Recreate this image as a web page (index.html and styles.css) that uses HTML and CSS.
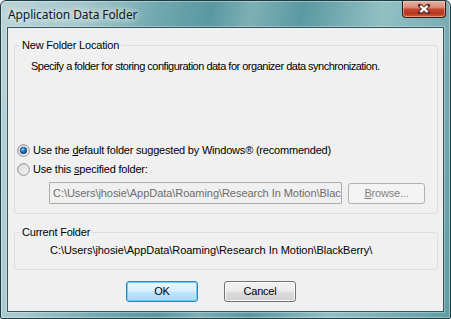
FILE: index.html
```html
<!DOCTYPE html>
<html>
<head>
<meta charset="utf-8">
<link rel="stylesheet" href="styles.css">
</head>
<body>
<div class="window">
  <div class="titlebar">
    <span class="title">Application Data Folder</span>
    <div class="close">
      <svg width="12" height="10" viewBox="0 0 12 10">
        <path d="M2 1.5 L10 8.5 M10 1.5 L2 8.5" stroke="#4a2a24" stroke-width="4" stroke-linecap="square"/>
        <path d="M2.3 1.8 L9.7 8.2 M9.7 1.8 L2.3 8.2" stroke="#ffffff" stroke-width="2.2" stroke-linecap="butt"/>
      </svg>
    </div>
  </div>
  <div class="client">
    <fieldset class="group group-location">
      <legend>New Folder Location</legend>
      <div class="desc">Specify a folder for storing configuration data for organizer data synchronization.</div>
      <div class="radio-row first">
        <svg class="radio" width="13" height="13" viewBox="0 0 13 13">
          <defs>
            <linearGradient id="rg1" x1="0" y1="0" x2="1" y2="1">
              <stop offset="0" stop-color="#d6d6d6"/>
              <stop offset="1" stop-color="#fbfbfb"/>
            </linearGradient>
            <radialGradient id="dot" cx="0.4" cy="0.35" r="0.7">
              <stop offset="0" stop-color="#8fd0ff"/>
              <stop offset="0.45" stop-color="#1f78c9"/>
              <stop offset="1" stop-color="#0b3b78"/>
            </radialGradient>
          </defs>
          <circle cx="6.5" cy="6.5" r="5.8" fill="url(#rg1)" stroke="#8b8d8f" stroke-width="1"/>
          <circle cx="6.5" cy="6.5" r="3.3" fill="url(#dot)" stroke="#1c4f86" stroke-width="0.8"/>
        </svg>
        <span class="label">Use the <u>d</u>efault folder suggested by Windows® (recommended)</span>
      </div>
      <div class="radio-row second">
        <svg class="radio" width="13" height="13" viewBox="0 0 13 13">
          <defs>
            <linearGradient id="rg2" x1="0" y1="0" x2="1" y2="1">
              <stop offset="0" stop-color="#d2d2d2"/>
              <stop offset="1" stop-color="#fcfcfc"/>
            </linearGradient>
          </defs>
          <circle cx="6.5" cy="6.5" r="5.8" fill="url(#rg2)" stroke="#8b8d8f" stroke-width="1"/>
          <circle cx="6.5" cy="6.5" r="3.8" fill="none" stroke="#e9e9e9" stroke-width="1"/>
        </svg>
        <span class="label">Use this <u>s</u>pecified folder:</span>
      </div>
      <div class="path-row">
        <div class="field"><span class="field-text">C:\Users\jhosie\AppData\Roaming\Research In Motion\BlackBerry\</span></div>
        <div class="btn btn-disabled"><u>B</u>rowse...</div>
      </div>
    </fieldset>
    <fieldset class="group group-current">
      <legend>Current Folder</legend>
      <div class="current-path">C:\Users\jhosie\AppData\Roaming\Research In Motion\BlackBerry\</div>
    </fieldset>
    <div class="buttons">
      <div class="btn btn-default">OK</div>
      <div class="btn btn-normal">Cancel</div>
    </div>
  </div>
</div>
</body>
</html>
```
FILE: styles.css
```css
html, body {
  margin: 0;
  padding: 0;
  background: #ffffff;
}

.window {
  box-sizing: border-box;
  width: 451px;
  height: 319px;
  border: 1px solid #1f3b42;
  border-radius: 6px 6px 2px 2px;
  background: linear-gradient(100deg, #b9d4d7 0%, #a3c7cb 16%, #6ea7af 32%, #5a98a1 42%, #7db0b6 50%, #5b99a2 60%, #91c0c4 76%, #7fb2b8 86%, #5e9ca5 100%);
  box-shadow: inset 0 0 0 1px rgba(255,255,255,0.35);
  display: flex;
  flex-direction: column;
  font-family: "Liberation Sans", Arial, sans-serif;
  font-size: 11px;
  line-height: 13px;
  letter-spacing: -0.2px;
  color: #000;
}

.titlebar {
  height: 26px;
  flex: none;
  display: flex;
  align-items: flex-start;
  justify-content: space-between;
}

.title {
  font-family: "Noto Sans", "Open Sans", sans-serif;
  font-size: 12px;
  line-height: 16px;
  letter-spacing: -0.1px;
  margin-top: 6px;
  margin-left: 7px;
  color: #0b1a1c;
  text-shadow: 0 0 6px rgba(255,255,255,0.95), 0 0 10px rgba(255,255,255,0.7), 0 0 14px rgba(255,255,255,0.5);
}

.close {
  box-sizing: border-box;
  width: 44px;
  height: 17px;
  margin-right: 4px;
  border: 1px solid #3b1810;
  border-top: none;
  border-radius: 0 0 4px 4px;
  background: linear-gradient(#e9b0a2 0%, #d98a77 40%, #c4472f 52%, #b7361f 78%, #d0603f 100%);
  box-shadow: inset 0 0 0 1px rgba(255,220,210,0.45);
  display: flex;
  align-items: center;
  justify-content: center;
}

.client {
  box-sizing: border-box;
  flex: 1;
  margin: 0 6px 6px 6px;
  border: 1px solid #34555b;
  box-shadow: 0 0 0 1px rgba(255,255,255,0.3);
  background: #f0f0f0;
  display: flex;
  flex-direction: column;
}

.group {
  margin: 0 5px 0 6px;
  border: 1px solid #d5dfe5;
  border-radius: 3px;
  padding: 0 2px;
  min-width: 0;
}

.group legend {
  padding: 0 2px;
  margin-left: 3px;
  line-height: 13px;
}

.group-location {
  margin-top: 11px;
  padding-top: 8px;
  padding-bottom: 9px;
}

.group-current {
  margin-top: 12px;
  padding-top: 5px;
  padding-bottom: 12px;
}

.desc {
  margin-left: 14px;
  white-space: nowrap;
  letter-spacing: -0.5px;
}

.radio-row {
  display: flex;
  align-items: center;
  height: 13px;
}

.radio-row.first {
  margin-top: 71px;
}

.radio-row.second {
  margin-top: 6px;
}

.radio {
  flex: none;
  display: block;
}

.label {
  margin-left: 3px;
  white-space: nowrap;
}

.label u, .btn u {
  text-decoration-thickness: 1px;
  text-underline-offset: 1px;
}

.path-row {
  display: flex;
  align-items: flex-end;
  margin-top: 6px;
  margin-left: 32px;
}

.field {
  box-sizing: border-box;
  flex: none;
  width: 293px;
  height: 22px;
  border: 1px solid #abadb3;
  border-radius: 1px;
  background: #f0f0f0;
  color: #6d6d6d;
  padding: 4px 0 0 3px;
  white-space: nowrap;
  overflow: hidden;
  letter-spacing: -0.05px;
}

.btn {
  box-sizing: border-box;
  flex: none;
  height: 21px;
  border-radius: 3px;
  display: flex;
  align-items: center;
  justify-content: center;
}

.btn-disabled {
  width: 77px;
  margin-left: 6px;
  border: 1px solid #adb2b5;
  background: #f4f4f4;
  color: #838383;
}

.current-path {
  margin-left: 33px;
  white-space: nowrap;
  letter-spacing: -0.05px;
}

.buttons {
  display: flex;
  gap: 26px;
  margin-top: 11px;
  padding-left: 118px;
}

.btn-default {
  width: 72px;
  border: 1px solid #3c7fb1;
  background: linear-gradient(#eaf6fd 0%, #d9f0fc 48%, #bee6fd 52%, #a7d9f5 100%);
  box-shadow: inset 0 0 0 1px #5fd3ff;
}

.btn-normal {
  width: 72px;
  border: 1px solid #707070;
  background: linear-gradient(#f2f2f2 0%, #ebebeb 48%, #dddddd 52%, #cfcfcf 100%);
  box-shadow: inset 0 0 0 1px #fcfcfc;
}
```
